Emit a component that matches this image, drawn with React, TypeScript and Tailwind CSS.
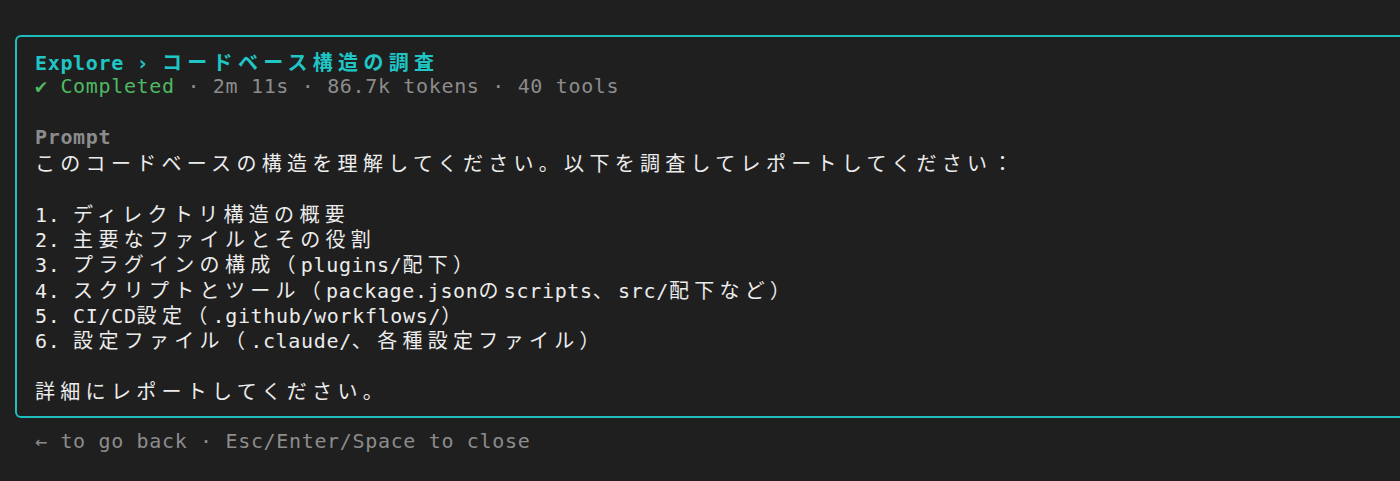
const isWide = (c: string) => {
  const code = c.codePointAt(0) ?? 0;
  return (
    (code >= 0x2e80 && code <= 0xa4cf) ||
    (code >= 0xac00 && code <= 0xd7a3) ||
    (code >= 0xf900 && code <= 0xfaff) ||
    (code >= 0xff00 && code <= 0xff60) ||
    (code >= 0xffe0 && code <= 0xffe6)
  );
};

// terminal-style text: full-width chars take two cells
const Cells = ({ s }: { s: string }) => {
  const runs: { wide: boolean; text: string }[] = [];
  for (const c of Array.from(s)) {
    const wide = isWide(c);
    const last = runs[runs.length - 1];
    if (last && last.wide === wide) last.text += c;
    else runs.push({ wide, text: c });
  }
  return (
    <>
      {runs.map((r, i) =>
        r.wide ? (
          <span
            key={i}
            className="font-['Noto_Sans_CJK_JP',sans-serif] text-[20px] tracking-[5.3px]"
          >
            {r.text}
          </span>
        ) : (
          <span key={i}>{r.text}</span>
        )
      )}
    </>
  );
};

const Line = ({ children }: { children?: React.ReactNode }) => (
  <div className="h-[25.3px] leading-[25.3px] whitespace-pre">{children}</div>
);

const items = [
  "1. ディレクトリ構造の概要",
  "2. 主要なファイルとその役割",
  "3. プラグインの構成（plugins/配下）",
  "4. スクリプトとツール（package.jsonのscripts、src/配下など）",
  "5. CI/CD設定（.github/workflows/）",
  "6. 設定ファイル（.claude/、各種設定ファイル）",
];

export default function App() {
  return (
    <div className="h-[481px] w-full overflow-hidden bg-[#1f1f1f] pt-[35px] font-['DejaVu_Sans_Mono','Noto_Sans_CJK_JP',monospace] text-[20px] tracking-[0.66px] text-[#ececec]">
      <div className="ml-[15px] w-[1420px] rounded-[6px] border-2 border-[#1fbdbd] pb-[13px] pl-[18px] pt-[12px]">
        <Line>
          <span className="font-bold text-[#20c5c5]">
            <Cells s="Explore › コードベース構造の調査" />
          </span>
        </Line>
        <Line>
          <span className="text-[#4fb962]">✔ Completed</span>
          <span className="text-[#8c8c8c]"> · 2m 11s · 86.7k tokens · 40 tools</span>
        </Line>
        <Line />
        <Line>
          <span className="font-bold text-[#8c8c8c]">Prompt</span>
        </Line>
        <Line>
          <Cells s="このコードベースの構造を理解してください。以下を調査してレポートしてください：" />
        </Line>
        <Line />
        {items.map((item, index) => (
          <Line key={index}>
            <Cells s={item} />
          </Line>
        ))}
        <Line />
        <Line>
          <Cells s="詳細にレポートしてください。" />
        </Line>
      </div>
      <div className="mt-[11px] pl-[35px] leading-[25.3px] whitespace-pre text-[#8c8c8c]">
        ← to go back · Esc/Enter/Space to close
      </div>
    </div>
  );
}
